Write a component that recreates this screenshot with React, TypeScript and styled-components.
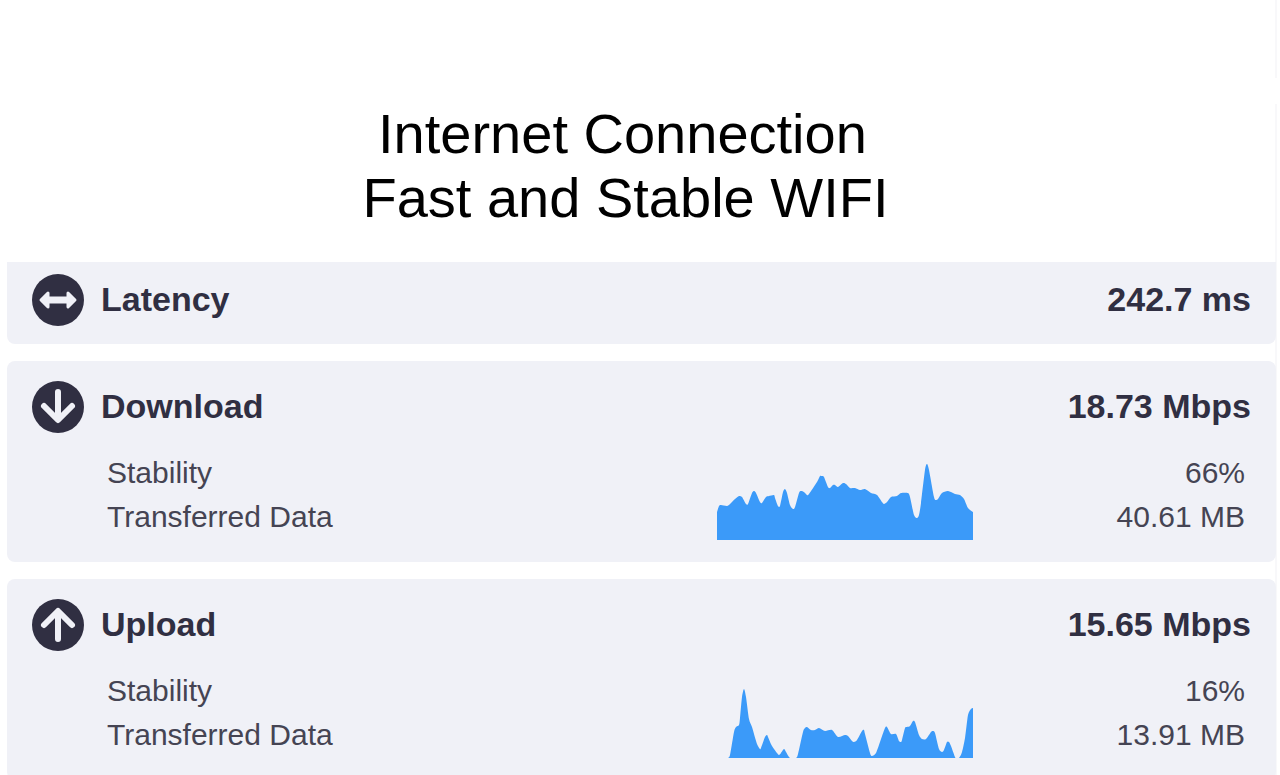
import React from "react";
import styled, { createGlobalStyle } from "styled-components";

const GlobalStyle = createGlobalStyle`
  *, *::before, *::after { box-sizing: border-box; }
  body {
    margin: 0;
    background: #fff;
    color: #302f42;
    font-family: "Liberation Sans", Arial, sans-serif;
    overflow-x: hidden;
  }
`;

const Page = styled.main`
  padding: 0 4px 0 7px;
  background: linear-gradient(#f8f8fa 78px, #fff 78px 104px, #f8f8fa 104px)
    no-repeat right 3px top / 2px 100%;
`;

const Header = styled.header`
  display: flex;
  justify-content: center;
  height: 262px;
  padding: 102px 32px 0 0;
`;

const Title = styled.h1`
  margin: 0;
  color: #000;
  font-size: 56px;
  font-weight: 400;
  line-height: 64px;
  white-space: pre;
`;

const Panels = styled.div`
  display: flex;
  flex-direction: column;
  gap: 17px;
`;

const Panel = styled.section<{ $compact?: boolean }>`
  padding: ${(p) => (p.$compact ? "12px 25px 18px" : "20px 25px 22px")};
  border-radius: ${(p) => (p.$compact ? "0 0 8px 8px" : "8px")};
  background: #f0f1f7;
`;

const PanelHead = styled.div`
  display: flex;
  height: 52px;
  font-size: 34px;
  font-weight: 700;
  line-height: 50px;
`;

const Badge = styled.svg`
  width: 52px;
  height: 52px;
  margin-right: 17px;
`;

const Name = styled.h2`
  margin: 0;
  font-size: inherit;
`;

const Value = styled.span`
  margin-left: auto;
`;

const Details = styled.div`
  display: grid;
  grid-template-columns: 1fr 256px 272px;
  padding: 18px 6px 0 75px;
  color: #454453;
  font-size: 30px;
  line-height: 44px;
`;

const List = styled.div`
  display: flex;
  flex-direction: column;
`;

const Figures = styled(List)`
  text-align: right;
`;

const Chart = styled.svg`
  display: block;
  width: 256px;
  height: 89px;
`;

type Point = [number, number];

const CHART_WIDTH = 256;
const BASELINE = 88;

const downloadSamples: Point[] = [
  [0, 60], [2, 54], [4, 53], [10, 54], [13, 52], [18, 47], [22, 44], [25, 45], [29, 52], [31, 52],
  [35, 41], [37, 39], [39, 41], [43, 50], [45, 51], [49, 45], [52, 44], [57, 43], [58, 46], [61, 54],
  [63, 54], [66, 40], [68, 37], [70, 41], [73, 53], [76, 57], [78, 55], [82, 41], [84, 39], [87, 40],
  [90, 43], [92, 42], [100, 30], [103, 24], [105, 24], [107, 25], [111, 35], [113, 36], [116, 33],
  [118, 33], [121, 35], [126, 31], [129, 32], [133, 36], [138, 36], [143, 38], [148, 37], [154, 41],
  [160, 43], [165, 50], [167, 52], [170, 50], [174, 45], [180, 44], [184, 41], [191, 41], [193, 45],
  [197, 63], [200, 66], [202, 63], [204, 51], [208, 18], [210, 12], [212, 18], [217, 45], [219, 48],
  [221, 47], [225, 41], [231, 39], [238, 42], [243, 43], [247, 47], [251, 56], [256, 60],
];

const uploadSamples: Point[] = [
  [11, 88], [13, 85], [17, 62], [19, 57], [22, 55], [23, 48], [25, 27], [27, 19], [29, 27], [32, 49],
  [35, 57], [40, 74], [43, 79], [44, 78], [48, 67], [50, 65], [51, 67], [55, 76], [60, 83], [62, 85],
  [64, 83], [67, 79], [69, 82], [73, 88], [79, 88], [81, 84], [86, 62], [88, 58], [90, 57], [94, 60],
  [98, 60], [102, 58], [108, 61], [115, 60], [121, 67], [128, 65], [131, 66], [135, 71], [137, 72],
  [140, 70], [145, 61], [147, 60], [148, 64], [153, 83], [155, 86], [159, 83], [164, 69], [168, 58],
  [170, 57], [174, 64], [179, 64], [182, 71], [184, 72], [185, 70], [188, 58], [190, 57], [193, 56],
  [196, 51], [198, 52], [202, 65], [205, 69], [209, 69], [214, 62], [216, 61], [218, 63], [222, 79],
  [225, 82], [227, 80], [230, 72], [232, 72], [234, 76], [238, 87], [239, 88], [242, 88], [245, 82],
  [248, 68], [251, 45], [254, 39], [256, 38],
];

/* Closed area under a smooth curve that passes through every sample. */
function areaPath(samples: Point[]) {
  const last = samples.length - 1;
  let d = `M${samples[0][0]} ${BASELINE}L${samples[0].join(" ")}`;
  for (let i = 0; i < last; i++) {
    const before = samples[Math.max(i - 1, 0)];
    const from = samples[i];
    const to = samples[i + 1];
    const after = samples[Math.min(i + 2, last)];
    const c1 = [from[0] + (to[0] - before[0]) / 8, from[1] + (to[1] - before[1]) / 8];
    const c2 = [to[0] - (after[0] - from[0]) / 8, to[1] - (after[1] - from[1]) / 8];
    d += `C${c1.join(" ")} ${c2.join(" ")} ${to.join(" ")}`;
  }
  return `${d}V${BASELINE}Z`;
}

const arrows = {
  both: (
    <path
      d="M9 26L16 19V24H36V19L43 26L36 33V28H16V33Z"
      fill="#f0f1f7"
      stroke="#f0f1f7"
      strokeWidth="3"
      strokeLinejoin="round"
    />
  ),
  down: <path d="M26 11V38M12 25L26 39L40 25" />,
  up: <path d="M26 40V13M12 26L26 12L40 26" />,
};

type Direction = keyof typeof arrows;

function DirectionBadge({ direction }: { direction: Direction }) {
  return (
    <Badge viewBox="0 0 52 52" aria-hidden="true">
      <circle cx="26" cy="26" r="26" fill="#302f42" />
      <g fill="none" stroke="#f0f1f7" strokeWidth="6" strokeLinecap="round" strokeLinejoin="round">
        {arrows[direction]}
      </g>
    </Badge>
  );
}

interface MetricProps {
  direction: Direction;
  name: string;
  value: string;
  details?: { stability: string; transferred: string; samples: Point[] };
}

function Metric({ direction, name, value, details }: MetricProps) {
  return (
    <Panel $compact={!details}>
      <PanelHead>
        <DirectionBadge direction={direction} />
        <Name>{name}</Name>
        <Value>{value}</Value>
      </PanelHead>
      {details && (
        <Details>
          <List>
            <span>Stability</span>
            <span>Transferred Data</span>
          </List>
          <Chart
            viewBox={`0 -1 ${CHART_WIDTH} ${BASELINE + 1}`}
            role="img"
            aria-label={`${name} speed over time`}
          >
            <path d={areaPath(details.samples)} fill="#3b9af9" />
          </Chart>
          <Figures>
            <span>{details.stability}</span>
            <span>{details.transferred}</span>
          </Figures>
        </Details>
      )}
    </Panel>
  );
}

export default function App() {
  return (
    <>
      <GlobalStyle />
      <Page>
        <Header>
          <Title>{" Internet Connection\nFast and Stable WIFI"}</Title>
        </Header>
        <Panels>
          <Metric direction="both" name="Latency" value="242.7 ms" />
          <Metric
            direction="down"
            name="Download"
            value="18.73 Mbps"
            details={{ stability: "66%", transferred: "40.61 MB", samples: downloadSamples }}
          />
          <Metric
            direction="up"
            name="Upload"
            value="15.65 Mbps"
            details={{ stability: "16%", transferred: "13.91 MB", samples: uploadSamples }}
          />
        </Panels>
      </Page>
    </>
  );
}
